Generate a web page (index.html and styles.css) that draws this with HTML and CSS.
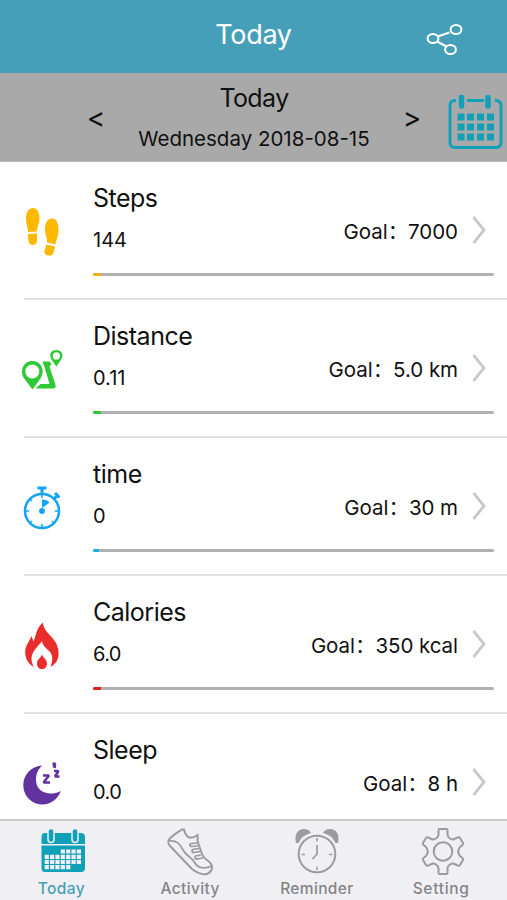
FILE: index.html
```
<!DOCTYPE html>
<html lang="en">
<head>
  <meta charset="UTF-8">
  <meta name="viewport" content="width=device-width, initial-scale=1.0">
  <title>Today</title>
  <link rel="stylesheet" href="styles.css">
</head>
<body>
  <header class="topbar">
    <h1>Today</h1>
    <svg class="share" width="40" height="36" viewBox="0 0 40 36">
      <path d="M12.5 17.5L24.5 13.5M12 22.5L21.5 27.5"/>
      <ellipse cx="8" cy="19.5" rx="5.4" ry="4.6"/>
      <ellipse cx="31" cy="10.5" rx="5.4" ry="4.6"/>
      <ellipse cx="25.5" cy="30.5" rx="5.4" ry="4.6"/>
    </svg>
  </header>

  <section class="datebar">
    <span class="arrow">&lt;</span>
    <div class="date">
      <h2>Today</h2>
      <p>Wednesday 2018-08-15</p>
    </div>
    <span class="arrow">&gt;</span>
    <svg class="calendar" width="55" height="56" viewBox="0 0 55 56">
      <path class="frame" d="M8 6.5H7Q2 6.5 2 12V48Q2 53.500 7 53.500H48Q53 53.500 53 48V12Q53 6.500 48 6.500H47M19 6.500H36"/>
      <path class="rings" d="M13.500 3.500V12M40 3.500V12"/>
      <path d="M9.500 19.500h7v7h-7zM19 19.500h7v7h-7zM29 19.500h7v7h-7zM39 19.500h7v7h-7zM9.500 29.500h7v7h-7zM19 29.500h7v7h-7zM29 29.500h7v7h-7zM39 29.500h7v7h-7zM9.500 39.500h7v7h-7zM19 39.500h7v7h-7zM29 39.500h7v7h-7zM39 39.500h7v7h-7z"/>
    </svg>
  </section>

  <main class="list">
    <article class="row steps">
      <svg class="icon" width="48" height="56" viewBox="0 0 48 56">
        <path d="M15 4C10 4 8 9 8 15C8 20 10 23 10 28L19 27.500C19 23 21.500 20 21.500 14C21.500 8 19 4 15 4ZM10 30L19 29.500V36C19 39.500 17.500 41 15 41C12 41 10.500 39.500 10.300 36Z"/>
        <path d="M34 14.500C29.500 14.500 27 19 27 25C27 31 29.500 34 29 38.500L37.500 40.500C38 36 40.500 33 40.500 26C40.500 19 38.500 14.500 34 14.500ZM28.500 40.500L37 42.500L35.500 48.500C34.500 51.500 33 52 30 51.500C27 51 26 49 26.500 47Z"/>
      </svg>
      <div class="info">
        <h3>Steps</h3>
        <p class="value">144</p>
        <p class="goal">Goal：<span>7000</span></p>
        <svg class="chevron" width="14" height="30" viewBox="0 0 14 30"><path d="M1.500 2L12 15L1.500 28"/></svg>
        <div class="bar"><i></i></div>
      </div>
    </article>

    <article class="row distance">
      <svg class="icon" width="48" height="56" viewBox="0 0 48 56">
        <path fill-rule="evenodd" d="M14.500 47.500L6.500 37C1 29.500 5 19 14.300 19C23.500 19 27.500 29 22.500 36.500ZM14.300 22.500A7 7 0 1 0 14.300 36.500A7 7 0 1 0 14.300 22.500Z"/>
        <path fill-rule="evenodd" d="M38.300 24.500L33.500 17.500C30 11 34.500 8 38.500 8C42.500 8 47 12 43 18ZM38.400 10.300A3.600 3.600 0 1 0 38.400 17.500A3.600 3.600 0 1 0 38.400 10.300Z"/>
        <path d="M24.500 19.500H31.500L33.500 22L31.500 24.500L37.500 43Q38 46.500 35 46.500H17.500L22.500 42H31.500L26.500 25Z"/>
      </svg>
      <div class="info">
        <h3>Distance</h3>
        <p class="value">0.11</p>
        <p class="goal">Goal：<span>5.0 km</span></p>
        <svg class="chevron" width="14" height="30" viewBox="0 0 14 30"><path d="M1.500 2L12 15L1.500 28"/></svg>
        <div class="bar"><i></i></div>
      </div>
    </article>

    <article class="row time">
      <svg class="icon" width="48" height="56" viewBox="0 0 48 56">
        <g class="line">
          <circle cx="24" cy="31" r="17"/>
          <path d="M19.500 8H28.500M24 8V14M36 19L39.500 15.500M37 13L41.500 17.500" stroke-width="3"/>
          <path d="M24 14V18M24 44V48M7 31H11M37 31H41M12 19L14 21M12 43L14 41M36 43L34 41" stroke-width="1.500"/>
        </g>
        <circle cx="24" cy="31" r="2.900"/>
        <path d="M24 19.500Q28.500 19 31.500 22.500L25 27.500H24Z"/>
      </svg>
      <div class="info">
        <h3>time</h3>
        <p class="value">0</p>
        <p class="goal">Goal：<span>30 m</span></p>
        <svg class="chevron" width="14" height="30" viewBox="0 0 14 30"><path d="M1.500 2L12 15L1.500 28"/></svg>
        <div class="bar"><i></i></div>
      </div>
    </article>

    <article class="row calories">
      <svg class="icon" width="48" height="56" viewBox="0 0 48 56">
        <path d="M25 4.500C25 15 39 19 40.500 33C41.300 41 38 46 32.500 49C36 40 34 35 30 32C26.500 29 24 26 24 23C20.500 28 14 33 13.500 40C13.300 44 14.500 47 16 49C10 46 7 40 7.200 33.500C7.400 27 11.500 24 13.500 18L15.500 23.500C18.500 17 18 10 25 4.500Z"/>
        <path d="M24 36.500C25 40 29 41 29 45.500C29 49 27 51 24 51C21 51 19 49 19 45.500C19 41 23 40 24 36.500Z"/>
      </svg>
      <div class="info">
        <h3>Calories</h3>
        <p class="value">6.0</p>
        <p class="goal">Goal：<span>350 kcal</span></p>
        <svg class="chevron" width="14" height="30" viewBox="0 0 14 30"><path d="M1.500 2L12 15L1.500 28"/></svg>
        <div class="bar"><i></i></div>
      </div>
    </article>

    <article class="row sleep">
      <svg class="icon" width="48" height="56" viewBox="0 0 48 56">
        <path d="M24.300 9.500C14 10 5.300 18 5.300 29C5.300 40 14 48.500 24.500 48.500C33 48.500 40 43 42.700 35C31 41 18 36 18 24C18 17 20.500 13 24.300 9.500Z"/>
        <path class="line" stroke-linejoin="bevel" d="M25 19.500H31L25.500 26.500H32" stroke-width="1.900"/>
        <path class="line" stroke-linejoin="bevel" d="M36 15H40.500L37 20.500H41.500" stroke-width="1.500"/>
        <path class="line" stroke-linejoin="bevel" d="M34.500 7.500L37.500 8L35.500 10.500L38 11" stroke-width="0.900"/>
      </svg>
      <div class="info">
        <h3>Sleep</h3>
        <p class="value">0.0</p>
        <p class="goal">Goal：<span>8 h</span></p>
        <svg class="chevron" width="14" height="30" viewBox="0 0 14 30"><path d="M1.500 2L12 15L1.500 28"/></svg>
        <div class="bar"><i></i></div>
      </div>
    </article>
  </main>

  <nav class="tabs">
    <a class="tab active">
      <svg width="48" height="50" viewBox="0 0 48 50">
        <path class="solid" d="M6 7H42Q46 7 46 11V18H2.500V11Q2.500 7 6 7ZM2.500 19.500H46V42Q46 46 42 46H6Q2.500 46 2.500 42Z"/>
        <path class="ring" d="M12 5.500V13.500M36 5.500V13.500"/>
        <path class="ring-fill" d="M12 5.500V13.500M36 5.500V13.500"/>
        <path class="cells" d="M21.750 25.500H42M5.700 30.800H42M5.700 36H42M5.700 41.200H32"/>
      </svg>
      <span>Today</span>
    </a>
    <a class="tab">
      <svg width="48" height="50" viewBox="0 0 48 50">
        <path d="M16 3.500C14 5 8 8 3.500 13C1 16 2 18 5 21L26 43C31 47 35 49 41 48C46 46 47 41 45 38C43 34 38 34 36 28L31.500 15Q32 12 31.500 9Q25 14 21 10Q19 8 18 3.500Z"/>
        <path d="M3 15C11 14 14 18 17 24C20 30 26 31 29 37C31 41 37 44 46 40M31.500 17L25 17.500Q22.500 19 25 20.500L32.500 20M33 22.500L27 23.500Q25 25 27 26.500L34.500 25.500M35 29L29.500 30Q28 31.500 30 33L37 32" stroke-width="1.700"/>
      </svg>
      <span>Activity</span>
    </a>
    <a class="tab">
      <svg width="48" height="50" viewBox="0 0 48 50">
        <path class="solid" d="M3 17C1 8 5 3 11 3Q16 3 18 7Q9 9 5.500 17ZM45 17C47 8 43 3 37 3Q32 3 30 7Q39 9 42.500 17Z"/>
        <circle cx="24" cy="28" r="18.300"/>
        <path d="M24 19V28L19.500 33" stroke-width="1.700"/>
        <path d="M24 12V15.500M24 40.500V44M8.500 28.500H12M36 28.500H39.500" stroke-width="1.500"/>
      </svg>
      <span>Reminder</span>
    </a>
    <a class="tab setting">
      <svg width="48" height="50" viewBox="0 0 48 50">
        <circle cx="24" cy="25.500" r="9.300"/>
        <path stroke-linejoin="round" d="M20.500 3H27.500Q28.500 3 28.500 4V8.500Q28.500 11 31 12.500Q33.500 14 35.500 13L39 11.300Q40.300 10.800 41 12L44 17Q44.600 18.200 43.500 19L41 21Q37.500 25.500 41 30L43.500 32Q44.600 32.800 44 34L41 39Q40.300 40.200 39 39.700L35.500 38Q33.500 37 31 38.500Q28.500 40 28.500 42.500V47Q28.500 48 27.500 48H20.500Q19.500 48 19.500 47V42.500Q19.500 40 17 38.500Q14.500 37 12.500 38L9 39.700Q7.700 40.200 7 39L4 34Q3.400 32.800 4.500 32L7 30Q10.500 25.500 7 21L4.500 19Q3.400 18.200 4 17L7 12Q7.700 10.800 9 11.300L12.500 13Q14.500 14 17 12.500Q19.500 11 19.500 8.500V4Q19.500 3 20.500 3Z"/>
      </svg>
      <span>Setting</span>
    </a>
  </nav>
</body>
</html>
```
FILE: styles.css
```
* {
  box-sizing: border-box;
}
body {
  margin: 0;
  height: 900px;
  display: flex;
  flex-direction: column;
  overflow: hidden;
  background: #fff;
  color: #111;
  font-family: Inter, "Noto Sans CJK SC", sans-serif;
}
h1, h2, h3, p {
  margin: 0;
  font-weight: 400;
  white-space: nowrap;
}
svg {
  display: block;
}

/* header */
.topbar {
  flex: none;
  height: 73px;
  padding-bottom: 3px;
  display: grid;
  grid-template-columns: 1fr auto 1fr;
  align-items: center;
  background: #469fb9;
  color: #fff;
}
.topbar h1 {
  grid-column: 2;
  font-size: 27px;
  line-height: 34px;
  letter-spacing: -0.3px;
}
.share {
  justify-self: end;
  margin: 3px 42px 0 0;
  fill: none;
  stroke: #fff;
  stroke-width: 2;
}

/* date picker */
.datebar {
  flex: none;
  height: 89px;
  padding-top: 4px;
  display: grid;
  grid-template-columns: 86px 20px 296px 20px 1fr;
  align-items: center;
  background: #a9a9a9;
  border-bottom: 1px solid #b8b8b8;
}
.arrow {
  grid-column: 2;
  margin-bottom: 3px;
  font-size: 28px;
  line-height: 34px;
  text-align: center;
}
.arrow ~ .arrow {
  grid-column: 4;
}
.date {
  text-align: center;
}
.date h2 {
  font-size: 25px;
  line-height: 40px;
  letter-spacing: -0.6px;
}
.date p {
  font-size: 20.500px;
  line-height: 42px;
}
.calendar {
  margin: 5px 0 0 26px;
  fill: #10a1b9;
}
.calendar .frame {
  fill: none;
  stroke: #10a1b9;
  stroke-width: 3;
}
.calendar .rings {
  stroke: #10a1b9;
  stroke-width: 5.500;
  stroke-linecap: round;
}

/* goals */
.list {
  flex: 1;
  min-height: 0;
  overflow: hidden;
}
.row {
  height: 138px;
  margin-left: 24px;
  display: flex;
  border-bottom: 2px solid #e2e2e2;
}
.icon {
  flex: none;
  margin: 42px 0 0 -6px;
  fill: currentColor;
}
.icon .line {
  fill: none;
  stroke: currentColor;
  stroke-width: 2.500;
}
.info {
  flex: 1;
  margin-left: 27px;
  padding-right: 13px;
  display: grid;
  grid-template-columns: 1fr auto 22px;
  grid-template-rows: 57px 43px 1fr;
  color: #111;
}
.info h3 {
  padding-top: 20px;
  font-size: 25px;
  line-height: 32px;
  letter-spacing: -0.500px;
}
.value {
  grid-row: 2;
  padding-top: 7px;
  font-size: 20px;
  line-height: 28px;
  letter-spacing: -0.600px;
}
.steps .value,
.distance .value {
  letter-spacing: 0;
}
.goal {
  grid-area: 2 / 2;
  margin: -1px 14px 0 0;
  font-size: 20.500px;
  line-height: 28px;
  letter-spacing: -0.050px;
}
.chevron {
  grid-area: 2 / 3;
  margin-top: -4px;
  fill: none;
  stroke: #c9c9cb;
  stroke-width: 2.800;
}
.bar {
  grid-area: 3 / 1 / 4 / 4;
  height: 3px;
  margin-top: 11px;
  border-radius: 2px;
  background: #b0b0b0;
}
.bar i {
  display: block;
  width: 8px;
  height: 3px;
  border-radius: 2px 0 0 2px;
}
.steps { color: #fcb900; }
.steps i { background: #eeb40c; }
.distance { color: #30c935; }
.distance i { background: #30c935; }
.time { color: #14a3f5; }
.time i { width: 6px; background: #14b4e0; }
.calories { color: #e92c2c; }
.calories i { background: #e02020; }
.sleep { color: #6232a0; }

/* bottom tabs */
.tabs {
  flex: none;
  height: 81px;
  padding-top: 5px;
  display: grid;
  grid-template-columns: repeat(4, 1fr);
  background: #efeff4;
  border-top: 2px solid #c8c8cb;
}
.tab {
  display: flex;
  flex-direction: column;
  align-items: center;
  color: #858587;
  font-size: 15.500px;
  font-weight: 500;
  line-height: 26px;
  letter-spacing: 0.350px;
}
.tab svg {
  fill: none;
  stroke: #9c9c9f;
  stroke-width: 2;
}
.tab .solid {
  fill: #9c9c9f;
  stroke: none;
}
.active {
  color: #469fb9;
}
.active span {
  margin-right: 4px;
}
.active .solid {
  fill: #10a1b9;
}
.active .ring {
  stroke: #efeff4;
  stroke-width: 7.500;
  stroke-linecap: round;
}
.active .ring-fill {
  stroke: #10a1b9;
  stroke-width: 4.500;
  stroke-linecap: round;
}
.active .cells {
  stroke: #efeff4;
  stroke-width: 4.200;
  stroke-dasharray: 4.200 1.150;
}
.setting span {
  margin-right: 5px;
  letter-spacing: 0.700px;
}
.setting svg {
  margin-right: 1px;
}
```
